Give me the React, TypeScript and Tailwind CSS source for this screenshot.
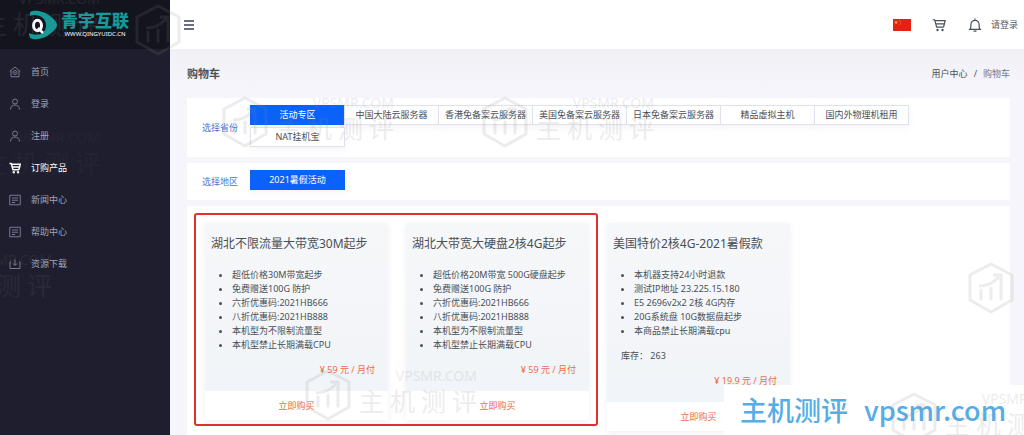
import type { ReactNode } from 'react';
import clsx from 'clsx';

const menu = [
  { label: '首页', icon: 'home' },
  { label: '登录', icon: 'user' },
  { label: '注册', icon: 'user' },
  { label: '订购产品', icon: 'cart', active: true },
  { label: '新闻中心', icon: 'news' },
  { label: '帮助中心', icon: 'news' },
  { label: '资源下载', icon: 'download' },
];

const provinces = [
  '活动专区',
  '中国大陆云服务器',
  '香港免备案云服务器',
  '美国免备案云服务器',
  '日本免备案云服务器',
  '精品虚拟主机',
  '国内外物理机租用',
  'NAT挂机宝',
];

const plans = [
  {
    name: '湖北不限流量大带宽30M起步',
    features: [
      '超低价格30M带宽起步',
      '免费赠送100G 防护',
      '六折优惠码:2021HB666',
      '八折优惠码:2021HB888',
      '本机型为不限制流量型',
      '本机型禁止长期满载CPU',
    ],
    price: '59',
  },
  {
    name: '湖北大带宽大硬盘2核4G起步',
    features: [
      '超低价格20M带宽 500G硬盘起步',
      '免费赠送100G 防护',
      '六折优惠码:2021HB666',
      '八折优惠码:2021HB888',
      '本机型为不限制流量型',
      '本机型禁止长期满载CPU',
    ],
    price: '59',
  },
  {
    name: '美国特价2核4G-2021暑假款',
    features: [
      '本机器支持24小时退款',
      '测试IP地址 23.225.15.180',
      'E5 2696v2x2 2核 4G内存',
      '20G系统盘 10G数据盘起步',
      '本商品禁止长期满载cpu',
    ],
    stock: 263,
    price: '19.9',
  },
];

const marks = [
  { place: 'left-[135px] top-[4px] opacity-15', logoOnly: true },
  { place: 'left-[222px] top-[96px] opacity-15' },
  { place: 'left-[482px] top-[96px] opacity-15' },
  { place: 'left-[305px] top-[369px] opacity-15' },
  { place: 'left-[968px] top-[262px] opacity-15', logoOnly: true },
  { place: 'left-[891px] top-[392px] opacity-15' },
  { place: '-left-[72px] -top-[8px] opacity-15' },
  { place: '-left-[72px] top-[131px] opacity-5' },
  { place: '-left-[120px] top-[253px] opacity-10' },
];

const iconPaths: Record<string, ReactNode> = {
  home: (
    <>
      <path d="M1.5 11 12 2l10.500 9M4 9v12.500h16V9" />
      <circle cx="12" cy="13" r="4" />
      <circle cx="12" cy="13" r="0.8" />
    </>
  ),
  user: (
    <>
      <circle cx="12" cy="7" r="5" />
      <path d="M3 23c0-6 4-9 9-9s9 3 9 9" />
    </>
  ),
  cart: (
    <>
      <path d="M1 3h3.500L8 15.500h12M5 4.500h17.500L20 15M6.500 10h14" />
      <circle cx="9.500" cy="20.500" r="1" />
      <circle cx="18" cy="20.500" r="1" />
    </>
  ),
  news: <path d="M1.500 2.500h21v19h-21zM6 8h12M6 12.500h12M6 17h6" />,
  download: <path d="M4 8H2v13h20V8h-2M12 3v11M8 11l4 4 4-4" />,
  bell: (
    <path d="M1.500 19.500h21M4 19c1-2 1-5 1-8a7 7 0 0 1 14 0c0 3 0 6 1 8M12 1v3M9.500 22.500h5" />
  ),
};

function Icon({ name, className }: { name: string; className?: string }) {
  return (
    <svg
      viewBox="0 0 24 24"
      fill="none"
      stroke="currentColor"
      strokeWidth={2}
      className={clsx('shrink-0', className)}
      aria-hidden="true"
    >
      {iconPaths[name]}
    </svg>
  );
}

function Logo() {
  return (
    <a href="#" className="flex h-[49px] items-center bg-[#14141f] pl-[29px]">
      <svg viewBox="0 0 28 30" className="h-[30px] w-[28px] shrink-0" aria-hidden="true">
        <path
          d="M1 2C7-1 16 2 21 6c4 3 7 6 7 9s-3 6-7 9C16 28 7 31 1 28l-1-4z"
          fill="#149a98"
        />
        <path d="M0 6c8-3 17 1 17 9.500S8 27 0 23z" fill="#14141f" />
        <ellipse cx="8.500" cy="15.500" rx="4" ry="5.200" fill="none" stroke="#fff" strokeWidth="3" />
        <path d="m9 18 5 5" stroke="#fff" strokeWidth="2.500" />
      </svg>
      <span className="ml-1 flex flex-col items-center">
        <span className="text-[17px] leading-[18px] font-black text-[#149a98]">青宇互联</span>
        <span className="text-[6px] leading-[8px] text-white">WWW.QINGYUIDC.CN</span>
      </span>
    </a>
  );
}

function Sidebar() {
  return (
    <aside className="w-[170px] shrink-0 bg-[#1f1e2e]">
      <Logo />
      <nav className="pt-[7px]">
        {menu.map(item => (
          <a
            key={item.label}
            href="#"
            className={clsx(
              'flex h-8 items-center gap-[10px] pl-[9px]',
              item.active ? 'text-white' : 'text-[#a0a5ba]'
            )}
          >
            <Icon
              name={item.icon}
              className={clsx('size-3', item.active ? 'stroke-3' : 'text-[#747b92]')}
            />
            {item.label}
          </a>
        ))}
      </nav>
    </aside>
  );
}

function Header() {
  return (
    <header className="flex h-[49px] shrink-0 items-center bg-white pr-[6px] pl-[14px] text-[#495057]">
      <button type="button" aria-label="菜单" className="flex w-[10px] flex-col gap-[2px]">
        <span className="h-[2px] bg-[#6a6f7d]" />
        <span className="h-[2px] bg-[#6a6f7d]" />
        <span className="h-[2px] bg-[#6a6f7d]" />
      </button>
      <button type="button" aria-label="语言" className="ml-auto">
        <svg viewBox="0 0 18 12" className="h-3 w-[18px]" aria-hidden="true">
          <path d="M0 0h18v12H0z" fill="#e02411" />
          <path d="m3 1.500.5 1.300h1.400l-1.100.8.4 1.300L3 4.100l-1.200.8.4-1.300-1.100-.8h1.400z" fill="#ffd800" />
          <path d="M6 1h.6v.6H6zM7 2.200h.6v.6H7zM7 3.800h.6v.6H7zM6 5h.6v.6H6z" fill="#ffd800" />
        </svg>
      </button>
      <button type="button" aria-label="购物车" className="ml-[21px]">
        <Icon name="cart" className="size-[14px]" />
      </button>
      <button type="button" aria-label="通知" className="ml-[22px]">
        <Icon name="bell" className="size-[14px]" />
      </button>
      <a href="#" className="ml-[9px] text-[#555b6d]">
        请登录
      </a>
    </header>
  );
}

function Tab({ label, active }: { label: string; active?: boolean }) {
  return (
    <button
      type="button"
      className={clsx(
        '-ml-px h-5 w-[95px] border whitespace-nowrap shadow-[0_3px_6px_rgba(80,80,160,0.06)]',
        active
          ? 'border-[#0a62fb] bg-[#0a62fb] text-white'
          : 'border-[#dfe2ea] bg-white text-[#495057]'
      )}
    >
      {label}
    </button>
  );
}

function FilterRow({ label, options }: { label: string; options: string[] }) {
  return (
    <section className="flex items-center bg-white py-[7px] pr-3 pl-[15px]">
      <h2 className="w-12 shrink-0 text-[#4a74d8]">{label}</h2>
      <div className="flex flex-1 flex-wrap gap-y-[2px] pb-[3px] pl-px">
        {options.map((option, i) => (
          <Tab key={option} label={option} active={i === 0} />
        ))}
      </div>
    </section>
  );
}

function PlanCard({ plan }: { plan: (typeof plans)[number] }) {
  return (
    <article className="w-[183px] shrink-0 shadow-[0_2px_6px_rgba(60,80,140,0.08)]">
      <div className="bg-linear-to-b from-[#f6f7f9] to-[#f1f4f8] pt-[13px] pb-[14px]">
        <h3 className="pl-[6px] text-[12px] leading-4 whitespace-nowrap">{plan.name}</h3>
        <ul className="mt-4 list-disc pl-[27px] leading-[14px] whitespace-nowrap">
          {plan.features.map(f => (
            <li key={f}>{f}</li>
          ))}
        </ul>
        {plan.stock && <p className="mt-[11px] pl-[14px] leading-[14px]">库存： {plan.stock}</p>}
        <p className="mt-[11px] pr-[13px] text-right leading-[14px] text-[#ec6c45]">
          ¥ {plan.price} 元 / 月付
        </p>
      </div>
      <button type="button" className="h-[29px] w-full bg-white text-[#ec6c45]">
        立即购买
      </button>
    </article>
  );
}

function Watermark({ place, logoOnly }: { place: string; logoOnly?: boolean }) {
  return (
    <div
      className={clsx('pointer-events-none absolute flex text-[#888888]', place)}
      aria-hidden="true"
    >
      <svg viewBox="0 0 46 52" fill="none" stroke="currentColor" className="h-[52px] w-[46px] shrink-0">
        <path d="M23 2 44 13v25L23 50 2 38V13z" strokeWidth="3" strokeLinejoin="round" />
        <path d="M11 24c9 0 14-3 20-9M25 13h8v8" strokeWidth="3" />
        <path d="M13 37v-9M23 37V26M33 37V22" strokeWidth="3" strokeLinecap="round" />
      </svg>
      {!logoOnly && (
        <div className="flex w-[126px] shrink-0 flex-col items-end">
          <span className="text-[14px] leading-[14px]">VPSMR.COM</span>
          <div className="flex gap-[6px] text-[25px] leading-[36px]">
            <span>主</span>
            <span>机</span>
            <span>测</span>
            <span>评</span>
          </div>
        </div>
      )}
    </div>
  );
}

export default function App() {
  return (
    <div className="relative flex h-screen overflow-hidden bg-[#f4f4fa] font-['Noto_Sans','Noto_Sans_CJK_SC',sans-serif] text-[9px] leading-[14px] text-[#495057]">
      <Sidebar />
      <div className="flex min-w-0 flex-1 flex-col">
        <Header />
        <main className="flex flex-1 flex-col bg-linear-to-b from-[#f0f0f5] to-[#f5f5fb] to-10% pr-[14px] pl-[17px]">
          <div className="flex h-[49px] shrink-0 items-center justify-between">
            <h1 className="text-[11px] font-bold">购物车</h1>
            <nav className="flex gap-[6px]">
              <a href="#">用户中心</a>
              <span>/</span>
              <span className="text-[#74788d]">购物车</span>
            </nav>
          </div>
          <div className="flex flex-1 flex-col gap-[6px]">
            <FilterRow label="选择省份" options={provinces} />
            <FilterRow label="选择地区" options={['2021暑假活动']} />
            <section className="relative flex flex-1 items-start gap-[18px] bg-white px-[18px] pt-[17px]">
              {plans.map(plan => (
                <PlanCard key={plan.name} plan={plan} />
              ))}
              <div className="pointer-events-none absolute top-[7px] left-[7px] h-[213px] w-[404px] rounded-[3px] border-2 border-[#e0312a]" />
            </section>
          </div>
        </main>
      </div>

      <div className="absolute right-0 bottom-0 flex h-[50px] w-[300px] items-center gap-4 bg-white pl-4 font-['Noto_Sans_CJK_SC',sans-serif] text-[27px] font-medium whitespace-nowrap text-[#56ade6]">
        <span>主机测评</span>
        <span>vpsmr.com</span>
      </div>

      {marks.map(mark => (
        <Watermark key={mark.place} {...mark} />
      ))}
    </div>
  );
}
